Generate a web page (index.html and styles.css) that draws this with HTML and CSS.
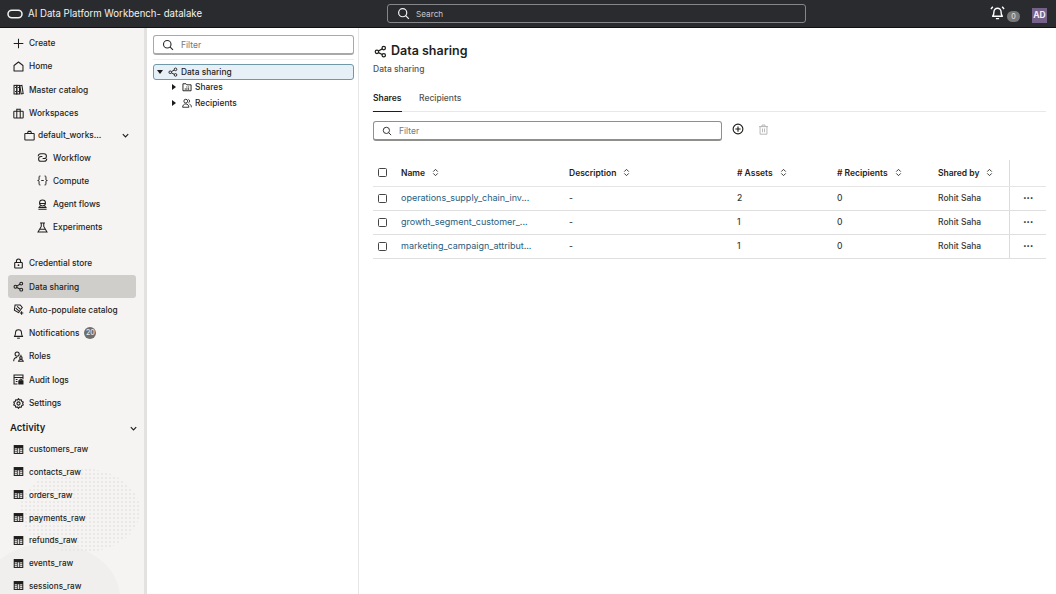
FILE: index.html
```html
<!DOCTYPE html>
<html lang="en">
<head>
<meta charset="utf-8">
<title>Data sharing</title>
<link rel="stylesheet" href="styles.css">
</head>
<body>
<svg class="defs" width="0" height="0" aria-hidden="true">
  <defs>
    <symbol id="share" viewBox="0 0 16 16"><g fill="none" stroke="currentColor" stroke-width="1.5"><circle cx="3.6" cy="8.4" r="2.1"/><circle cx="12" cy="3.8" r="2.1"/><circle cx="12" cy="12.6" r="2.1"/><path d="M5.5 7.4 10.1 4.8M5.5 9.4l4.600 2.300"/></g></symbol>
    <symbol id="search" viewBox="0 0 16 16"><g fill="none" stroke="currentColor" stroke-width="1.5"><circle cx="7" cy="7" r="5"/><path d="m10.6 10.6 4 4"/></g></symbol>
    <symbol id="plus" viewBox="0 0 16 16"><path d="M8 1v14M1 8h14" stroke="currentColor" stroke-width="1.5" fill="none"/></symbol>
    <symbol id="home" viewBox="0 0 16 16"><path d="M1.500 14.500V6.500L8 1.500l6.500 5v8z" fill="none" stroke="currentColor" stroke-width="1.500" stroke-linejoin="round"/></symbol>
    <symbol id="catalog" viewBox="0 0 16 16"><g fill="none" stroke="currentColor" stroke-width="1.500"><rect x="1.500" y="2" width="4" height="12.500"/><rect x="5.500" y="2" width="4" height="12.500"/><path d="m10 2.500 3-.6 1.800 12-3 .5z"/><path d="M3 5h1.600M7 5h1.600M3 11h1.600M7 11h1.600"/></g></symbol>
    <symbol id="workspaces" viewBox="0 0 16 16"><g fill="none" stroke="currentColor" stroke-width="1.500"><rect x="1.200" y="4.800" width="13.600" height="9.700" rx=".8"/><path d="M5.500 4.800V1.800h5v3M5.500 4.800v9.700M10.500 4.800v9.700"/></g></symbol>
    <symbol id="briefcase" viewBox="0 0 16 16"><g fill="none" stroke="currentColor" stroke-width="1.500"><rect x="1.200" y="5" width="13.600" height="9.500" rx=".8"/><path d="M5 5 6.200 2h3.600L11 5"/></g></symbol>
    <symbol id="workflow" viewBox="0 0 16 16"><g fill="none" stroke="currentColor" stroke-width="1.500"><path d="M1.800 6.300A3.800 3.800 0 0 1 5.600 2.500h4.600a3.500 3.500 0 0 1 0 7H8.200"/><path d="M14.200 9.700a3.800 3.800 0 0 1-3.800 3.800H5.800a3.500 3.500 0 0 1 0-7h2"/></g></symbol>
    <symbol id="compute" viewBox="0 0 16 16"><g fill="none" stroke="currentColor" stroke-width="1.400"><path d="M5 1.500H4Q3 1.500 3 3v3.500Q3 8 1 8q2 0 2 1.500V13Q3 14.500 4 14.500H5M11 1.500h1q1 0 1 1.500v3.500Q13 8 15 8q-2 0-2 1.500V13q0 1.500-1 1.500H11M6.200 8h3.600"/></g></symbol>
    <symbol id="agent" viewBox="0 0 16 16"><g fill="none" stroke="currentColor" stroke-width="1.500"><circle cx="8" cy="5.800" r="4.300"/><path d="M4 6.500h8M5 9.800 3 12.500h10l-2-2.700M2 14.800h12"/></g></symbol>
    <symbol id="flask" viewBox="0 0 16 16"><path d="M4.500 1.500h7M6.200 1.500v5L1.500 14.500h13L9.800 6.500v-5M4.200 10.500h7.600" fill="none" stroke="currentColor" stroke-width="1.500"/></symbol>
    <symbol id="lock" viewBox="0 0 16 16"><g fill="none" stroke="currentColor" stroke-width="1.600"><rect x="2.500" y="6.500" width="11" height="8" rx=".8"/><path d="M5 6.500V4.500a3 3 0 0 1 6 0v2"/></g><circle cx="8" cy="10.500" r="1.300" fill="currentColor"/></symbol>
    <symbol id="autocat" viewBox="0 0 16 16"><g fill="none" stroke="currentColor" stroke-width="1.500"><path d="M3 1.500h7.500l3 3.500-5.500 7.500-6-3.500z"/><path d="m4 6 4.500 4M6 3.500l4.500 4"/><path d="M12.500 10.500v5M10 13h5"/></g></symbol>
    <symbol id="bell" viewBox="0 0 16 16"><g fill="none" stroke="currentColor" stroke-width="1.500"><path d="M2 12.200h12c-1.300-1.200-1.700-2.500-1.700-5.500a4.300 4.300 0 0 0-8.600 0c0 3-.4 4.300-1.700 5.500z" stroke-linejoin="round"/><path d="M6 14.800h4"/></g></symbol>
    <symbol id="alarm" viewBox="0 0 16 16"><g fill="none" stroke="currentColor" stroke-width="1.500"><path d="M2.800 12h10.400c-1.200-1.200-1.400-2.500-1.400-4.800a3.800 3.800 0 0 0-7.600 0C4.200 9.500 4 10.800 2.800 12z" stroke-linejoin="round"/><path d="M6.300 14.500h3.400M1 4.200 3 1.800M15 4.200l-2-2.400"/></g></symbol>
    <symbol id="roles" viewBox="0 0 16 16"><g fill="none" stroke="currentColor" stroke-width="1.500"><circle cx="6" cy="4.500" r="3"/><path d="M1 15c0-3.300 1.800-5.500 5-5.500M11.500 5.500v2.500"/><circle cx="11.500" cy="10" r="1.800"/><path d="M8 15c.3-1.600 1.500-2.600 3.500-2.600S14.700 13.400 15 15z"/></g></symbol>
    <symbol id="audit" viewBox="0 0 16 16"><g fill="none" stroke="currentColor" stroke-width="1.500"><path d="M6.500 14.500H1.500V1.500h13v6M1.500 5h13M4 8h2.500M4 11h2.500"/><rect x="8.500" y="10" width="6" height="4.500" fill="currentColor"/><path d="M10 10V8.700a1.500 1.500 0 0 1 3 0V10"/></g></symbol>
    <symbol id="gear" viewBox="0 0 16 16"><circle cx="8" cy="8" r="2.300" fill="none" stroke="currentColor" stroke-width="1.600"/><path d="M8 1 9.500 3 12 2.500 12.700 5 15 6 14 8 15 10 12.700 11 12 13.500 9.500 13 8 15 6.500 13 4 13.500 3.300 11 1 10 2 8 1 6 3.300 5 4 2.500 6.500 3z" fill="none" stroke="currentColor" stroke-width="1.600" stroke-linejoin="round"/></symbol>
    <symbol id="chev" viewBox="0 0 10 10"><path d="m2 3.500 3 3 3-3" fill="none" stroke="currentColor" stroke-width="1.300"/></symbol>
    <symbol id="table" viewBox="0 0 16 16"><path fill="currentColor" d="M1 1.500h14v13H1z"/><path d="M2.500 6h3.200v1.500H2.500zM6.800 6h2.400v7.200H6.800zM10.300 6h3.200v1.500h-3.200zM2.500 8.500h3.200v1.900H2.500zM10.300 8.500h3.200v1.900h-3.200zM2.500 11.300h3.200v1.900H2.500zM10.300 11.300h3.200v1.900h-3.200z" fill="#dcdbd9"/></symbol>
    <symbol id="folder" viewBox="0 0 16 16"><path d="M1.500 2.800h4.800l1.500 1.700h6.700v9.500h-13z" fill="none" stroke="currentColor" stroke-width="1.500"/><path d="M7 7h1.600v1.600H7zM9.800 7h1.600v1.600H9.800zM7 9.800h1.600v2.400H7zM9.800 9.800h1.600v2.400H9.800zM4.500 9.800h1.300v2.400H4.500z" fill="currentColor"/></symbol>
    <symbol id="people" viewBox="0 0 16 16"><g fill="none" stroke="currentColor" stroke-width="1.400"><circle cx="6" cy="5" r="3"/><path d="M1 14.800c0-3 2-5.300 5-5.300s5 2.300 5 5.300zM10.200 2.200a3 3 0 0 1 0 5.600M12 9.800c2 .6 3 2.500 3 5"/></g></symbol>
    <symbol id="sort" viewBox="0 0 10 10"><path d="M2.500 4 5 1.500 7.500 4M2.500 6 5 8.500 7.500 6" fill="none" stroke="currentColor" stroke-width="1.100"/></symbol>
    <symbol id="addc" viewBox="0 0 16 16"><circle cx="8" cy="8" r="6.500" fill="none" stroke="currentColor" stroke-width="1.500"/><path d="M8 4.500v7M4.500 8h7" stroke="currentColor" stroke-width="1.500"/></symbol>
    <symbol id="trash" viewBox="0 0 16 16"><path d="M1.500 3.800h13M5.800 3.800V1.500h4.400v2.300M3 3.800v11h10v-11M6.500 6.500v5.500M9.500 6.500v5.500" fill="none" stroke="currentColor" stroke-width="1.200"/></symbol>
  </defs>
</svg>

<header class="topbar">
  <div class="brand">
    <svg class="oracle" viewBox="0 0 16 10"><rect x="1" y="1.200" width="14" height="7.600" rx="3.800" fill="none" stroke="currentColor" stroke-width="1.500"/></svg>
    <span>AI Data Platform Workbench- datalake</span>
  </div>
  <div class="globalsearch">
    <svg class="ic13"><use href="#search"/></svg>
    <span>Search</span>
  </div>
  <div class="topright">
    <svg class="alarm"><use href="#alarm"/></svg>
    <span class="zero">0</span>
    <span class="avatar">AD</span>
  </div>
</header>

<div class="shell">
  <nav class="sidebar">
    <div class="blob blob-a"></div>
    <div class="blob blob-b"></div>
    <a class="nav"><svg class="ic"><use href="#plus"/></svg>Create</a>
    <a class="nav"><svg class="ic"><use href="#home"/></svg>Home</a>
    <a class="nav"><svg class="ic"><use href="#catalog"/></svg>Master catalog</a>
    <a class="nav"><svg class="ic"><use href="#workspaces"/></svg>Workspaces</a>
    <a class="nav sub1"><svg class="ic"><use href="#briefcase"/></svg><span class="grow">default_works...</span><svg class="chev"><use href="#chev"/></svg></a>
    <a class="nav sub2"><svg class="ic"><use href="#workflow"/></svg>Workflow</a>
    <a class="nav sub2"><svg class="ic"><use href="#compute"/></svg>Compute</a>
    <a class="nav sub2"><svg class="ic"><use href="#agent"/></svg>Agent flows</a>
    <a class="nav sub2"><svg class="ic"><use href="#flask"/></svg>Experiments</a>
    <a class="nav spaced"><svg class="ic"><use href="#lock"/></svg>Credential store</a>
    <a class="nav active"><svg class="ic"><use href="#share"/></svg>Data sharing</a>
    <a class="nav"><svg class="ic"><use href="#autocat"/></svg>Auto-populate catalog</a>
    <a class="nav"><svg class="ic"><use href="#bell"/></svg>Notifications<span class="count">20</span></a>
    <a class="nav"><svg class="ic"><use href="#roles"/></svg>Roles</a>
    <a class="nav"><svg class="ic"><use href="#audit"/></svg>Audit logs</a>
    <a class="nav"><svg class="ic"><use href="#gear"/></svg>Settings</a>
    <div class="section"><span class="grow">Activity</span><svg class="chev"><use href="#chev"/></svg></div>
    <a class="nav tbl"><svg class="ic"><use href="#table"/></svg>customers_raw</a>
    <a class="nav tbl"><svg class="ic"><use href="#table"/></svg>contacts_raw</a>
    <a class="nav tbl"><svg class="ic"><use href="#table"/></svg>orders_raw</a>
    <a class="nav tbl"><svg class="ic"><use href="#table"/></svg>payments_raw</a>
    <a class="nav tbl"><svg class="ic"><use href="#table"/></svg>refunds_raw</a>
    <a class="nav tbl"><svg class="ic"><use href="#table"/></svg>events_raw</a>
    <a class="nav tbl"><svg class="ic"><use href="#table"/></svg>sessions_raw</a>
  </nav>

  <aside class="treepanel">
    <div class="input tree-filter">
      <svg class="ic13"><use href="#search"/></svg>
      <span>Filter</span>
    </div>
    <div class="treerule"></div>
    <div class="tree-row root"><i class="tri down"></i><svg class="ic10"><use href="#share"/></svg>Data sharing</div>
    <div class="tree-row child"><i class="tri"></i><svg class="ic10"><use href="#folder"/></svg>Shares</div>
    <div class="tree-row child"><i class="tri"></i><svg class="ic10"><use href="#people"/></svg>Recipients</div>
  </aside>

  <main class="main">
    <div class="title"><svg class="title-ic"><use href="#share"/></svg><h1>Data sharing</h1></div>
    <p class="subtitle">Data sharing</p>
    <div class="tabs"><span class="tab on">Shares</span><span class="tab">Recipients</span></div>
    <div class="toolbar">
      <div class="input main-filter">
        <svg class="ic10"><use href="#search"/></svg>
        <span>Filter</span>
      </div>
      <svg class="add"><use href="#addc"/></svg>
      <svg class="del"><use href="#trash"/></svg>
    </div>
    <table class="grid">
      <colgroup><col class="c1"><col class="c2"><col class="c3"><col class="c4"><col class="c5"><col class="c6"><col class="c7"></colgroup>
      <thead>
        <tr>
          <th><i class="box"></i></th>
          <th>Name<svg class="sort"><use href="#sort"/></svg></th>
          <th>Description<svg class="sort"><use href="#sort"/></svg></th>
          <th># Assets<svg class="sort"><use href="#sort"/></svg></th>
          <th># Recipients<svg class="sort"><use href="#sort"/></svg></th>
          <th>Shared by<svg class="sort"><use href="#sort"/></svg></th>
          <th class="acts"></th>
        </tr>
      </thead>
      <tbody>
        <tr><td><i class="box"></i></td><td><a class="link">operations_supply_chain_inv...</a></td><td>-</td><td>2</td><td>0</td><td>Rohit Saha</td><td class="acts">•••</td></tr>
        <tr><td><i class="box"></i></td><td><a class="link">growth_segment_customer_...</a></td><td>-</td><td>1</td><td>0</td><td>Rohit Saha</td><td class="acts">•••</td></tr>
        <tr><td><i class="box"></i></td><td><a class="link">marketing_campaign_attribut...</a></td><td>-</td><td>1</td><td>0</td><td>Rohit Saha</td><td class="acts">•••</td></tr>
      </tbody>
    </table>
  </main>
</div>
</body>
</html>
```
FILE: styles.css
```css
* { box-sizing: border-box; }
html, body { margin: 0; height: 100%; }
body {
  width: 1056px;
  height: 594px;
  overflow: hidden;
  background: #fff;
  color: #1f1e1c;
  font: 500 8.500px/12px Inter, "Liberation Sans", sans-serif;
  display: flex;
  flex-direction: column;
}
.defs { position: absolute; }
h1, p { margin: 0; }

.topbar {
  flex: 0 0 28px;
  height: 28px;
  background: #2a2b2f;
  border-bottom: 1px solid #111;
  color: #f2f2f2;
  display: flex;
  align-items: center;
  padding: 0 9px 0 7px;
}
.brand {
  width: 380px;
  display: flex;
  align-items: center;
  gap: 5px;
  font-size: 9.650px;
  font-weight: 400;
}
.oracle { width: 16px; height: 10px; }
.globalsearch {
  width: 419px;
  height: 19px;
  border: 1px solid #85868a;
  border-radius: 3px;
  display: flex;
  align-items: center;
  gap: 6px;
  padding-left: 9px;
  color: #c9c9c9;
  font-size: 8.200px;
  font-weight: 400;
}
.globalsearch .ic13 { color: #f2f2f2; }
.ic13 { width: 13px; height: 13px; flex: none; }
.topright {
  margin-left: auto;
  display: flex;
  align-items: center;
  position: relative;
}
.alarm { width: 15px; height: 15px; margin-top: -3px; color: #fff; }
.zero {
  width: 13px; height: 11px;
  border-radius: 6px;
  background: #77787a;
  color: #ddd;
  font-size: 7px;
  line-height: 11px;
  text-align: center;
  margin: 6px 12px 0 2px;
}
.avatar {
  width: 15px; height: 15px;
  background: #75618a;
  color: #f4f0f6;
  font-size: 8.500px;
  font-weight: 700;
  line-height: 15px;
  text-align: center;
  margin-top: 3px;
}

.shell { flex: 1; display: flex; min-height: 0; }

.sidebar {
  flex: 0 0 147px;
  width: 147px;
  background: #f5f4f2;
  border-right: 3px solid #e3e2e0;
  padding: 3.500px 8px 0 8px;
  position: relative;
  overflow: hidden;
  display: flex;
  flex-direction: column;
  font-size: 8.300px;
}
.blob { position: absolute; border-radius: 50%; }
.blob-a { left: -20px; top: 515px; width: 140px; height: 110px; background: #f0efed; }
.blob-b {
  left: 20px; top: 440px; width: 120px; height: 85px;
  background-image: radial-gradient(circle, #e9e8e6 .7px, transparent 1px);
  background-size: 4px 4px;
}
.nav {
  position: relative;
  flex: 0 0 23.300px;
  height: 23.300px;
  display: flex;
  align-items: center;
  gap: 5px;
  padding-left: 5px;
  border-radius: 3px;
  color: #1f1e1c;
  white-space: nowrap;
}
.ic { width: 11px; height: 11px; flex: none; }
.sub1 { padding-left: 16px; gap: 3px; padding-right: 6px; flex-basis: 21.600px; height: 21.600px; }
.sub2 { padding-left: 29px; gap: 5px; flex-basis: 23.100px; height: 23.100px; }
.spaced { margin-top: 13px; }
.active { background: #cfcecb; }
.tbl { flex-basis: 22.800px; height: 22.800px; font-size: 8.100px; }
.grow { flex: 1; }
.chev { width: 9px; height: 9px; flex: none; }
.count {
  width: 12px; height: 12px;
  border-radius: 50%;
  background: #6f6e6c;
  color: #e8e8e8;
  font-size: 7px;
  line-height: 12px;
  text-align: center;
}
.section {
  position: relative;
  flex: 0 0 23px;
  height: 23px;
  padding: 4px 0 0 2px;
  margin-right: -2px;
  display: flex;
  align-items: center;
  font-size: 9.500px;
  font-weight: 600;
}

.treepanel {
  flex: 0 0 212px;
  width: 212px;
  border-right: 1px solid #e6e6e6;
  padding: 7px 4px 0 6px;
  display: flex;
  flex-direction: column;
}
.input {
  border: 1px solid #a9a9a7;
  border-bottom-width: 2px;
  border-radius: 3px;
  display: flex;
  align-items: center;
  color: #77767a;
  font-weight: 400;
}
.tree-filter { height: 20px; gap: 7px; padding-left: 8px; }
.tree-filter .ic13 { color: #2b2b2b; width: 12px; height: 12px; }
.treerule { height: 1px; background: #eeeeee; margin: 4px 0 4px; }
.tree-row {
  height: 15.500px;
  display: flex;
  align-items: center;
  color: #1f1e1c;
  gap: 3px;
  font-size: 8.400px;
}
.root {
  background: #e6f0f6;
  border: 1px solid #6f98a8;
  border-radius: 3px;
  padding-left: 3px;
}
.child { padding-left: 19px; }
.ic10 { width: 10px; height: 10px; flex: none; }
.tri {
  width: 0; height: 0;
  border-style: solid;
  border-width: 3.500px 0 3.500px 4px;
  border-color: transparent transparent transparent #1b1b1b;
  margin-right: 3px;
  flex: none;
}
.tri.down {
  border-width: 4px 3.500px 0 3.500px;
  border-color: #1b1b1b transparent transparent transparent;
  margin-right: 2px;
}

.main { flex: 1; padding: 14px 10px 0 14px; min-width: 0; }
.title { display: flex; align-items: center; gap: 4px; height: 18px; padding-left: 1px; }
.title-ic { width: 13px; height: 13px; }
h1 { font-size: 12.500px; font-weight: 600; line-height: 18px; }
.subtitle { margin-top: 3px; color: #55544f; height: 12px; }
.tabs {
  margin: 15px 0 0 -1px;
  height: 22px;
  display: flex;
  gap: 17.500px;
  border-bottom: 1px solid #e8e8e8;
  padding-left: 1px;
}
.tab { color: #55544f; height: 22px; line-height: 17px; }
.tab.on { color: #1f1e1c; font-weight: 600; border-bottom: 1px solid #1f1e1c; }
.toolbar { display: flex; align-items: center; margin-top: 9px; }
.main-filter { width: 349px; height: 20px; gap: 7px; padding-left: 8px; border-color: #8f8f8d; }
.main-filter .ic10 { color: #2b2b2b; }
.add { width: 12px; height: 12px; margin-left: 10px; margin-top: -4px; }
.del { width: 11px; height: 11px; margin-left: 14px; margin-top: -4px; color: #a9a9a7; }

.grid {
  width: 673px;
  margin-top: 19px;
  border-collapse: collapse;
  table-layout: fixed;
}
.c1 { width: 28px; } .c2 { width: 168px; } .c3 { width: 168px; }
.c4 { width: 100px; } .c5 { width: 101px; } .c6 { width: 71px; } .c7 { width: 37px; }
.grid th {
  height: 26px;
  padding: 0;
  text-align: left;
  font-weight: 600;
  border-bottom: 1px solid #e5e5e5;
  white-space: nowrap;
}
.grid td {
  height: 24px;
  padding: 0;
  border-bottom: 1px solid #dfdfdf;
  color: #3a3936;
  white-space: nowrap;
}
.box {
  display: block;
  width: 9px; height: 9px;
  margin-left: 5px;
  border: 1px solid #444;
  border-radius: 1.500px;
}
.sort { width: 9px; height: 9px; margin-left: 6px; vertical-align: -1.500px; color: #3a3936; }
.link { color: #27607f; font-size: 9px; font-weight: 400; }
.grid .acts { border-left: 1px solid #dcdcdc; text-align: center; font-size: 6px; letter-spacing: .2px; color: #222; padding-left: 1px; }
```
